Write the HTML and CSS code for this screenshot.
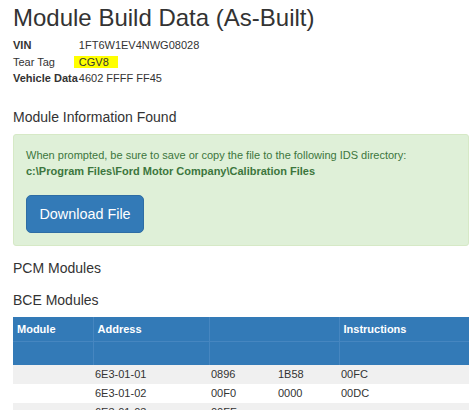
FILE: index.html
```html
<!DOCTYPE html>
<html>
<head>
<meta charset="utf-8">
<link rel="stylesheet" href="styles.css">
</head>
<body>
<div class="page">
  <h1 class="title">Module Build Data (As-Built)</h1>
  <table class="info">
    <tr><td class="lbl bold">VIN</td><td>1FT6W1EV4NWG08028</td></tr>
    <tr><td class="lbl">Tear Tag</td><td><span class="mark">CGV8</span></td></tr>
    <tr><td class="lbl bold">Vehicle Data</td><td>4602 FFFF FF45</td></tr>
  </table>
  <h4 class="sub first">Module Information Found</h4>
  <div class="alert">
    <p class="msg">When prompted, be sure to save or copy the file to the following IDS directory:<br><b>c:\Program Files\Ford Motor Company\Calibration Files</b></p>
    <button class="btn">Download File</button>
  </div>
  <h4 class="sub pcm">PCM Modules</h4>
  <h4 class="sub bce">BCE Modules</h4>
  <table class="grid">
    <colgroup>
      <col class="c1"><col class="c2"><col class="c3"><col class="c4"><col class="c5">
    </colgroup>
    <thead>
      <tr class="h1r"><th>Module</th><th>Address</th><th colspan="2"></th><th>Instructions</th></tr>
      <tr class="h2r"><th></th><th></th><th colspan="2"></th><th></th></tr>
    </thead>
    <tbody>
      <tr class="odd"><td></td><td>6E3-01-01</td><td>0896</td><td>1B58</td><td>00FC</td></tr>
      <tr><td></td><td>6E3-01-02</td><td>00F0</td><td>0000</td><td>00DC</td></tr>
      <tr class="odd"><td></td><td>6E3-01-03</td><td>00FF</td><td></td><td></td></tr>
    </tbody>
  </table>
</div>
</body>
</html>
```
FILE: styles.css
```css
html, body {
  margin: 0;
  padding: 0;
  background: #fff;
}
body {
  font-family: "Liberation Sans", Arial, sans-serif;
  color: #333;
  font-size: 11px;
}
.page {
  padding: 5px 0 0 13px;
  width: 456px;
}
.title {
  margin: 0;
  font-size: 24px;
  font-weight: normal;
  line-height: 26px;
  color: #333;
}
.info {
  border-collapse: collapse;
  margin-top: 6px;
}
.info td {
  padding: 0;
  line-height: 16.5px;
  white-space: nowrap;
  vertical-align: middle;
}
.info .bold {
  font-weight: bold;
}
.info td + td {
  padding-left: 1px;
}
.mark {
  background: #ffff00;
  padding: 0 9px 0 5px;
  margin-left: -5px;
}
.sub {
  margin: 0;
  font-size: 14px;
  font-weight: normal;
  line-height: 20px;
  color: #333;
}
.sub.first {
  margin-top: 20px;
}
.alert {
  margin-top: 7px;
  background: #dff0d8;
  border: 1px solid #d6e9c6;
  border-radius: 3px;
  padding: 12px;
  height: 86px;
}
.msg {
  margin: 0;
  color: #3c763d;
  line-height: 16px;
}
.msg b {
  font-weight: bold;
}
.btn {
  margin-top: 16px;
  display: block;
  box-sizing: border-box;
  height: 38px;
  width: 118px;
  padding: 0;
  white-space: nowrap;
  text-align: center;
  background: #337ab7;
  color: #fff;
  border: 1px solid #2e6da4;
  border-radius: 5px;
  font-family: "Liberation Sans", Arial, sans-serif;
  font-size: 14.4px;
}
.sub.pcm {
  margin-top: 12px;
}
.sub.bce {
  margin-top: 12px;
}
.grid {
  margin-top: 7px;
  width: 456px;
  border-collapse: collapse;
  table-layout: fixed;
}
.c1 { width: 80px; }
.c2 { width: 116px; }
.c3 { width: 67px; }
.c4 { width: 63px; }
.c5 { width: 130px; }
.grid th {
  background: #337ab7;
  color: #fff;
  font-weight: bold;
  text-align: left;
  padding: 0 4px;
  border: 1px solid #4686c0;
  border-top: none;
}
.grid th:first-child { border-left: none; }
.grid th:last-child { border-right: none; }
.h1r th { height: 24px; }
.h2r th { height: 23px; border-bottom: none; }
.grid td {
  height: 19px;
  padding: 0 2px;
  color: #333;
}
.grid tr.odd td {
  background: #f0f0f0;
}
```
